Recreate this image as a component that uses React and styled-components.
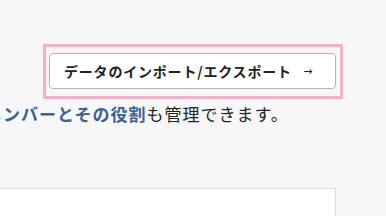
import styled, { createGlobalStyle } from 'styled-components'

const GlobalStyle = createGlobalStyle`
  html, body {
    margin: 0;
    padding: 0;
    height: 216px;
    background: #f7f7f7;
    overflow: hidden;
  }
  body {
    font-family: "Noto Sans CJK JP", "Noto Sans", sans-serif;
    color: #222;
  }
`

const Column = styled.main`
  width: 351px;
  margin-left: -15px;
  padding-top: 44px;
`

const ActionRow = styled.div`
  display: flex;
  justify-content: flex-end;
  margin-right: -7px;
`

const Highlight = styled.div`
  border: 3px solid #f3b1c9;
  padding: 6px 4px 7px 3px;
`

const LinkButton = styled.button`
  display: flex;
  align-items: center;
  height: 36px;
  width: 287px;
  box-sizing: border-box;
  padding: 0 0 0 14px;
  background: #fff;
  border: 1px solid #b4b4b4;
  border-radius: 4px;
  font-family: inherit;
  font-size: 14px;
  letter-spacing: 0.8px;
  font-weight: 700;
  color: #222;
  cursor: pointer;
`

const Arrow = styled.span`
  margin-left: 12px;
  font-size: 9px;
  font-weight: 700;
`

const Lead = styled.p`
  margin: 2px 0 0;
  font-size: 17px;
  letter-spacing: 1px;
  line-height: 25px;
  color: #222;
  white-space: nowrap;
`

const Strong = styled.strong`
  color: #3b6199;
  font-weight: 700;
`

const Card = styled.section`
  margin-top: 62px;
  height: 60px;
  background: #fff;
  border: 1px solid #dcdcdc;
`

export default function App() {
  return (
    <>
      <GlobalStyle />
      <Column>
        <ActionRow>
          <Highlight>
            <LinkButton>
              データのインポート/エクスポート
              <Arrow>→</Arrow>
            </LinkButton>
          </Highlight>
        </ActionRow>
        <Lead>
          <Strong>メンバーとその役割</Strong>も管理できます。
        </Lead>
        <Card />
      </Column>
    </>
  )
}
